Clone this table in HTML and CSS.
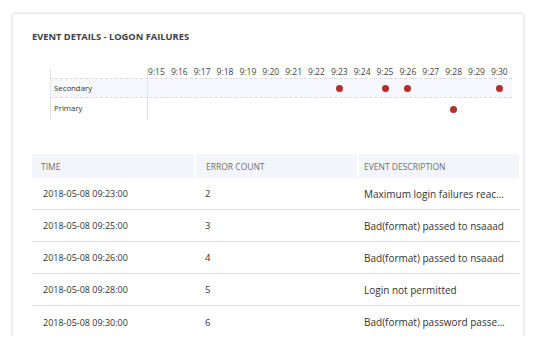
FILE: index.html
```html
<!DOCTYPE html>
<html>
<head>
<meta charset="utf-8">
<link rel="stylesheet" href="styles.css">
</head>
<body>
<div class="card">
  <h2 class="title">EVENT DETAILS - LOGON FAILURES</h2>
  <div class="chart">
    <div class="row axis">
      <div class="label"></div>
      <span class="tick">9:15</span><span class="tick">9:16</span><span class="tick">9:17</span><span class="tick">9:18</span>
      <span class="tick">9:19</span><span class="tick">9:20</span><span class="tick">9:21</span><span class="tick">9:22</span>
      <span class="tick">9:23</span><span class="tick">9:24</span><span class="tick">9:25</span><span class="tick">9:26</span>
      <span class="tick">9:27</span><span class="tick">9:28</span><span class="tick">9:29</span><span class="tick">9:30</span>
    </div>
    <div class="row band secondary">
      <div class="label">Secondary</div>
      <span class="dot c23"></span><span class="dot c25"></span><span class="dot c26"></span><span class="dot c30"></span>
    </div>
    <div class="row band primary">
      <div class="label">Primary</div>
      <span class="dot c28"></span>
    </div>
  </div>
  <div class="table">
    <div class="thead">
      <div class="th">TIME</div>
      <div class="th">ERROR COUNT</div>
      <div class="th">EVENT DESCRIPTION</div>
    </div>
    <div class="tr"><div class="td">2018-05-08 09:23:00</div><div class="td">2</div><div class="td">Maximum login failures reached</div></div>
    <div class="tr"><div class="td">2018-05-08 09:25:00</div><div class="td">3</div><div class="td">Bad(format) passed to nsaaad</div></div>
    <div class="tr"><div class="td">2018-05-08 09:26:00</div><div class="td">4</div><div class="td">Bad(format) passed to nsaaad</div></div>
    <div class="tr"><div class="td">2018-05-08 09:28:00</div><div class="td">5</div><div class="td">Login not permitted</div></div>
    <div class="tr last"><div class="td">2018-05-08 09:30:00</div><div class="td">6</div><div class="td">Bad(format) password passed to nsaaad</div></div>
  </div>
</div>
</body>
</html>
```
FILE: styles.css
```css
* { box-sizing: border-box; }
html, body { margin: 0; padding: 0; background: #fff; }
body { font-family: "Open Sans", "DejaVu Sans", sans-serif; color: #333; }

.card {
  margin: 14px 0 0 13px;
  width: 510px;
  height: 323px;
  background: #fff;
  box-shadow: 0 0 4px rgba(0,0,0,0.22);
  padding: 17px 4px 0 19px;
  overflow: hidden;
}

.title {
  margin: 0;
  font-size: 9.3px;
  line-height: 12px;
  font-weight: 700;
  color: #3d4150;
}

.chart {
  position: relative;
  margin: 26px 0 0 18px;
  width: 462px;
  height: 51px;
}
.chart::before, .chart::after {
  content: "";
  position: absolute;
  top: 0;
  bottom: 0;
  width: 1px;
  background: #e4e4e4;
  z-index: 1;
}
.chart::before { left: 0; }
.chart::after { left: 97px; }

.row {
  display: grid;
  grid-template-columns: 95px repeat(16, 22.86px);
  align-items: center;
}
.axis { height: 9px; }
.tick {
  font-size: 8.5px;
  line-height: 5px;
  align-self: start;
  text-align: center;
  color: #444;
  white-space: nowrap;
}
.band { height: 20px; }
.secondary {
  background: #f7f8fd;
  border-top: 1px dashed #dcdcdc;
  border-bottom: 1px dashed #dcdcdc;
}
.label {
  font-size: 7.8px;
  color: #333;
  padding-left: 4px;
  grid-column: 1;
}
.dot {
  justify-self: center;
  width: 7px;
  height: 7px;
  border-radius: 50%;
  background: #b52e29;
  grid-row: 1;
}
.primary .dot { margin-top: 2px; }
.c23 { grid-column: 10; }
.c25 { grid-column: 12; }
.c26 { grid-column: 13; }
.c28 { grid-column: 15; }
.c30 { grid-column: 17; }

.table {
  margin-top: 34px;
  width: 487px;
}
.thead, .tr {
  display: grid;
  grid-template-columns: 162px 161px 160px;
  column-gap: 2px;
  align-items: center;
}
.thead { height: 24px; align-items: stretch; }
.th {
  background: #f4f5fa;
  font-size: 8.5px;
  color: #707070;
  display: flex;
  align-items: center;
  padding-left: 9px;
}
.th:nth-child(2) { padding-left: 10px; }
.th:nth-child(3) { padding-left: 5px; }
.tr {
  height: 32px;
  border-bottom: 1px solid #dedede;
}
.tr.last { border-bottom: none; }
.td {
  font-size: 9px;
  color: #333;
  white-space: nowrap;
  overflow: hidden;
  text-overflow: ellipsis;
  padding-left: 11px;
}
.td:nth-child(2) { padding-left: 9px; font-size: 9.5px; }
.td:nth-child(3) { padding-left: 5px; padding-right: 11px; font-size: 10px; }
```
